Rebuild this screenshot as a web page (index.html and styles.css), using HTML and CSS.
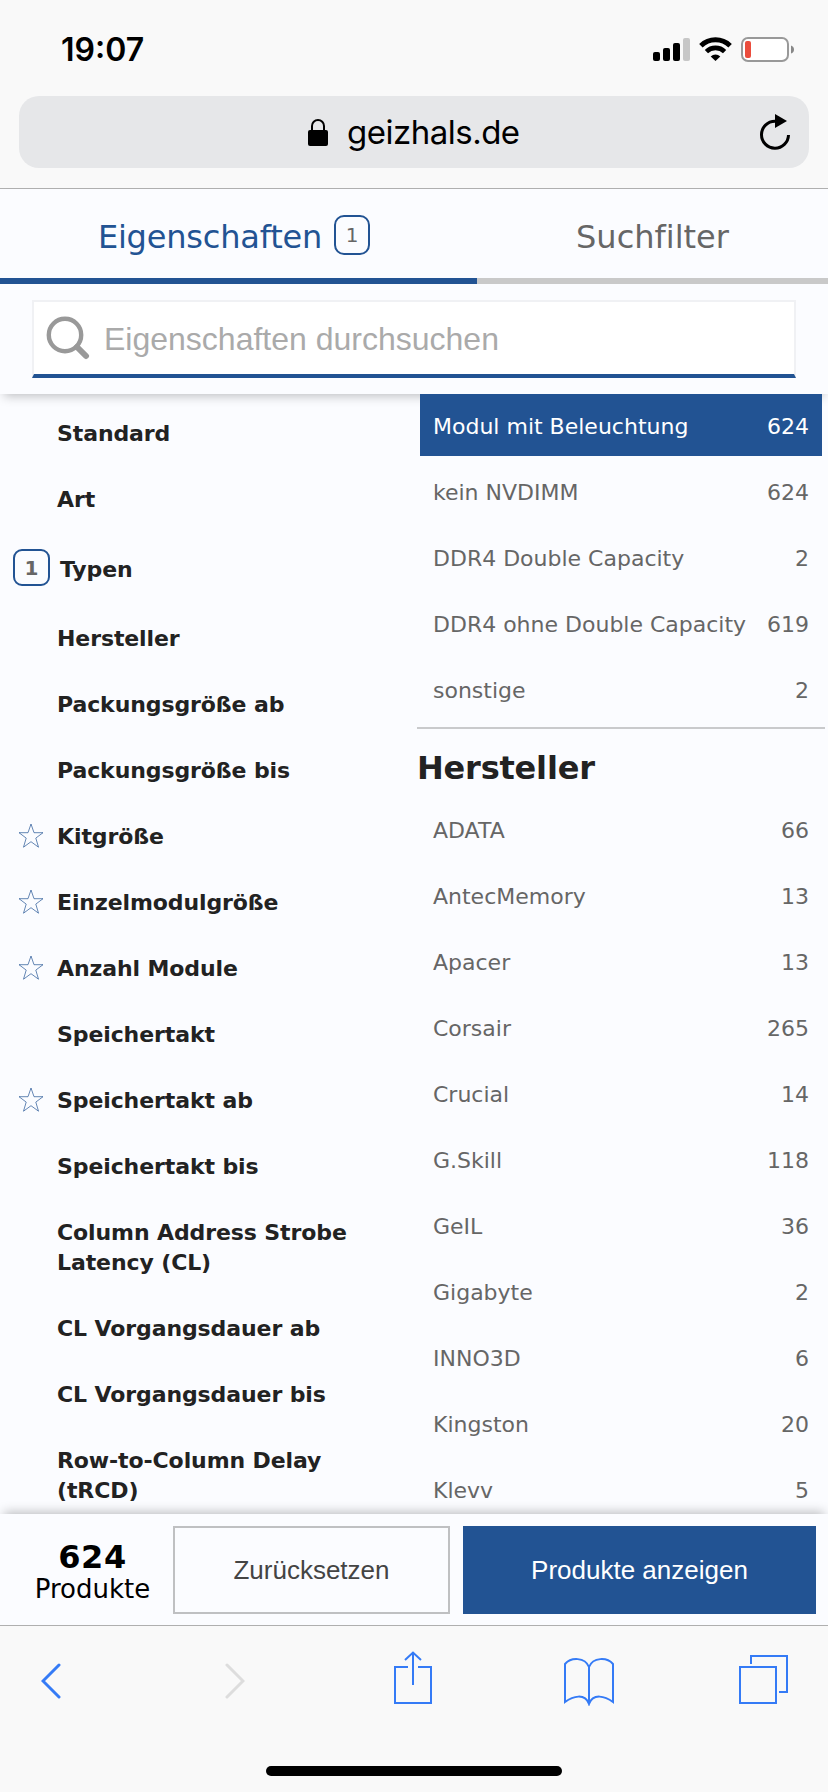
FILE: index.html
```html
<!DOCTYPE html>
<html lang="de">
<head>
    <meta charset="UTF-8">
    <title>geizhals.de</title>
    <link rel="stylesheet" href="styles.css">
</head>
<body>
<div class="browser">
    <div class="status">
        <span class="time">19:07</span>
        <svg class="status_icons" width="142" height="26" viewBox="0 0 142 26">
            <rect x="0" y="16" width="7" height="9" rx="2"/>
            <rect x="10" y="12" width="7" height="13" rx="2"/>
            <rect x="20" y="7" width="7" height="18" rx="2"/>
            <rect x="30" y="2" width="7" height="23" rx="2" fill="#c7c7c7"/>
            <path d="M47.9 9.7a21 21 0 0 1 29.2 0" fill="none" stroke="#000" stroke-width="5"/>
            <path d="M53.4 15.6a13 13 0 0 1 18.2 0" fill="none" stroke="#000" stroke-width="4.6"/>
            <path d="M57.7 20.5a7 7 0 0 1 9.6 0L62.5 25z"/>
            <rect x="89" y="2" width="46" height="23" rx="6" fill="#fff" stroke="#999" stroke-width="2"/>
            <rect x="92" y="5" width="6" height="17" rx="2" fill="#eb4d3d"/>
            <path d="M138 9.5q3 1 3 4t-3 4z" fill="#888"/>
        </svg>
    </div>
    <div class="url">
        <svg class="lock" width="20" height="27" viewBox="0 0 20 27">
            <path d="M4 13V7a6 6 0 0 1 12 0v6" fill="none" stroke="#000" stroke-width="2"/>
            <rect x="0" y="11" width="20" height="16" rx="2"/>
        </svg>
        <span class="domain">geizhals.de</span>
        <svg class="reload" width="30" height="36" viewBox="0 0 30 36">
            <path d="M15 7.2a13.5 13.5 0 1 0 13.5 13.8" fill="none" stroke="#000" stroke-width="3"/>
            <path d="M15 0l12 7-12 7z"/>
        </svg>
    </div>
</div>

<div class="header">
    <div class="tabs">
        <div class="tab active">Eigenschaften<span class="tab_count">1</span></div>
        <div class="tab">Suchfilter</div>
    </div>
    <div class="search">
        <svg width="44" height="44" viewBox="0 0 44 44">
            <circle cx="19" cy="19" r="16.2" fill="none" stroke="#999" stroke-width="4.4"/>
            <path d="M31 31l9 9" stroke="#999" stroke-width="6" stroke-linecap="round"/>
        </svg>
        <span class="placeholder">Eigenschaften durchsuchen</span>
    </div>
</div>

<svg class="defs">
    <symbol id="star" viewBox="0 0 26 26">
        <path d="M13 1l3 8.7h9l-7.2 5.4 2.7 9.1L13 18.7l-7.5 5.5 2.7-9.1L1 9.7h9z" fill="none" stroke="#225393" stroke-width="0.7"/>
    </symbol>
</svg>

<div class="content">
    <ul class="props">
        <li>Standard</li>
        <li>Art</li>
        <li class="selected"><span class="count">1</span>Typen</li>
        <li>Hersteller</li>
        <li>Packungsgröße ab</li>
        <li>Packungsgröße bis</li>
        <li class="fav"><svg><use href="#star"/></svg>Kitgröße</li>
        <li class="fav"><svg><use href="#star"/></svg>Einzelmodulgröße</li>
        <li class="fav"><svg><use href="#star"/></svg>Anzahl Module</li>
        <li>Speichertakt</li>
        <li class="fav"><svg><use href="#star"/></svg>Speichertakt ab</li>
        <li>Speichertakt bis</li>
        <li>Column Address Strobe Latency (CL)</li>
        <li>CL Vorgangsdauer ab</li>
        <li>CL Vorgangsdauer bis</li>
        <li>Row-to-Column Delay (tRCD)</li>
    </ul>
    <div class="values">
        <ul class="group">
            <li class="checked"><span>Modul mit Beleuchtung</span><span>624</span></li>
            <li><span>kein NVDIMM</span><span>624</span></li>
            <li><span>DDR4 Double Capacity</span><span>2</span></li>
            <li><span>DDR4 ohne Double Capacity</span><span>619</span></li>
            <li><span>sonstige</span><span>2</span></li>
        </ul>
        <h2>Hersteller</h2>
        <ul class="group">
            <li><span>ADATA</span><span>66</span></li>
            <li><span>AntecMemory</span><span>13</span></li>
            <li><span>Apacer</span><span>13</span></li>
            <li><span>Corsair</span><span>265</span></li>
            <li><span>Crucial</span><span>14</span></li>
            <li><span>G.Skill</span><span>118</span></li>
            <li><span>GeIL</span><span>36</span></li>
            <li><span>Gigabyte</span><span>2</span></li>
            <li><span>INNO3D</span><span>6</span></li>
            <li><span>Kingston</span><span>20</span></li>
            <li><span>Klevv</span><span>5</span></li>
        </ul>
    </div>
</div>

<div class="footer">
    <div class="total"><b>624</b><span>Produkte</span></div>
    <div class="btn reset">Zurücksetzen</div>
    <div class="btn show">Produkte anzeigen</div>
</div>

<div class="toolbar">
    <div class="tools">
        <svg width="20" height="36" viewBox="0 0 20 36"><path d="M18 2L2 18l16 16"/></svg>
        <svg class="off" width="20" height="36" viewBox="0 0 20 36"><path d="M2 2l16 16L2 34"/></svg>
        <svg class="thin share" width="38" height="54" viewBox="0 0 38 54"><path d="M14 16H1v36h36V16H24M19 34V1M11 9l8-7.500 8 7.500"/></svg>
        <svg class="thin" width="50" height="49" viewBox="0 0 50 49"><path d="M25 47V10C21 0 7 0 1 7v38c8-6 20-9 24 2 4-11 16-8 24-2V7C43 0 29 0 25 10"/></svg>
        <svg class="thin pages" width="49" height="49" viewBox="0 0 49 49"><path d="M1 12h36v36H1zM12 9V1h36v36h-8"/></svg>
    </div>
    <div class="home"></div>
</div>
</body>
</html>
```
FILE: styles.css
```css
* {
    box-sizing: border-box;
}

body {
    display: flex;
    flex-direction: column;
    margin: 0;
    width: 828px;
    height: 1792px;
    overflow: hidden;
    background: #fbfcff;
    font-family: "DejaVu Sans", Verdana, sans-serif;
    font-size: 22px;
    font-variant-ligatures: none;
    color: #222;
}

ul {
    margin: 0;
    padding: 0;
    list-style: none;
}

.defs {
    display: none;
}

.browser {
    height: 189px;
    background: #f9f9f9;
    border-bottom: 1px solid #b0b0b0;
}

.status {
    display: flex;
    justify-content: space-between;
    height: 96px;
    padding: 36px 33px 0 61px;
    color: #000;
}

.time {
    font: 600 32px/28px Inter, sans-serif;
}

.url {
    display: flex;
    align-items: center;
    height: 72px;
    margin: 0 19px;
    padding: 0 19px 0 289px;
    border-radius: 20px;
    background: #e6e7e9;
    color: #000;
}

.domain {
    flex: 1;
    margin-left: 19px;
    font: 33px/40px Inter, sans-serif;
    letter-spacing: -0.5px;
}

.header {
    height: 205px;
    background: #fbfcff;
    box-shadow: 0 6px 10px -4px rgba(0, 0, 0, .25);
}

.tabs {
    display: flex;
    height: 95px;
}

.tab {
    display: flex;
    align-items: center;
    justify-content: center;
    width: 351px;
    padding-top: 6px;
    border-bottom: 6px solid #c9c9c9;
    font-size: 32px;
    color: #666;
}

.active {
    width: 477px;
    padding-right: 9px;
    border-color: #225393;
    color: #225393;
    letter-spacing: -0.2px;
}

.tab_count {
    width: 36px;
    height: 40px;
    margin: -2px 0 2px 12px;
    border: 2px solid #225393;
    border-radius: 10px;
    font-size: 20px;
    line-height: 37px;
    text-align: center;
    color: #666;
}

.search {
    display: flex;
    align-items: center;
    height: 78px;
    margin: 16px 32px;
    padding-left: 12px;
    border: 2px solid #f0f1f4;
    border-bottom: 4px solid #225393;
    background: #fff;
}

.placeholder {
    margin-left: 14px;
    padding-top: 1px;
    font: 32px/40px "Liberation Sans", sans-serif;
    color: #aaa;
}

.content {
    display: flex;
    height: 1120px;
    overflow: hidden;
}

.props {
    width: 417px;
    padding-top: 7px;
    font-weight: bold;
    line-height: 30px;
    letter-spacing: -0.1px;
}

.props li {
    padding: 18px 40px 18px 57px;
}

.props .selected,
.props .fav {
    display: flex;
    align-items: center;
    padding-left: 13px;
}

.selected .count {
    width: 37px;
    height: 37px;
    margin: -2px 10px 2px 0;
    border: 2px solid #225393;
    border-radius: 9px;
    font-size: 20px;
    line-height: 34px;
    text-align: center;
    color: #666;
}

.fav svg {
    width: 26px;
    height: 26px;
    margin: -1px 13px 1px 5px;
}

.values {
    width: 408px;
    color: #666;
}

.group {
    margin: 0 3px;
}

.group li {
    display: flex;
    justify-content: space-between;
    height: 62px;
    margin-bottom: 4px;
    padding: 0 13px;
    line-height: 66px;
}

.group .checked {
    position: relative;
    background: #225393;
    color: #fff;
}

h2 {
    height: 71px;
    margin: 7px 0 0;
    border-top: 2px solid #c9cacc;
    font-size: 32px;
    line-height: 79px;
    color: #222;
    letter-spacing: -0.2px;
}

.footer {
    position: relative;
    display: flex;
    height: 111px;
    padding: 12px 12px 13px 12px;
    background: #fbfcff;
    box-shadow: 0 -6px 10px -4px rgba(0, 0, 0, .25);
}

.total {
    display: flex;
    flex-direction: column;
    align-items: center;
    width: 161px;
    padding-top: 15px;
    font-size: 26px;
    line-height: 32px;
    color: #000;
}

.total b {
    font-size: 32px;
    letter-spacing: 0.5px;
}

.btn {
    height: 88px;
    font: 26px/88px "Liberation Sans", sans-serif;
    text-align: center;
}

.reset {
    width: 277px;
    margin-right: 13px;
    border: 2px solid #bfc0c2;
    line-height: 84px;
    color: #444;
}

.show {
    width: 353px;
    background: #225393;
    color: #fff;
}

.toolbar {
    height: 167px;
    padding-top: 25px;
    border-top: 1px solid #b0b0b0;
    background: #f9f9f9;
}

.tools {
    display: grid;
    grid-template-columns: 184px 169px 170px 175px 49px;
    align-items: center;
    height: 60px;
    padding-left: 41px;
    fill: none;
    stroke: #357bf6;
    stroke-width: 3;
    stroke-linecap: round;
}

.tools .off {
    stroke: #ddd;
}

.tools .thin {
    stroke-width: 2;
    stroke-linecap: butt;
}

.tools .share {
    align-self: start;
}

.tools .pages {
    margin-bottom: 3px;
}

.home {
    width: 296px;
    height: 10px;
    margin: 55px auto 0;
    border-radius: 5px;
    background: #000;
}
```
